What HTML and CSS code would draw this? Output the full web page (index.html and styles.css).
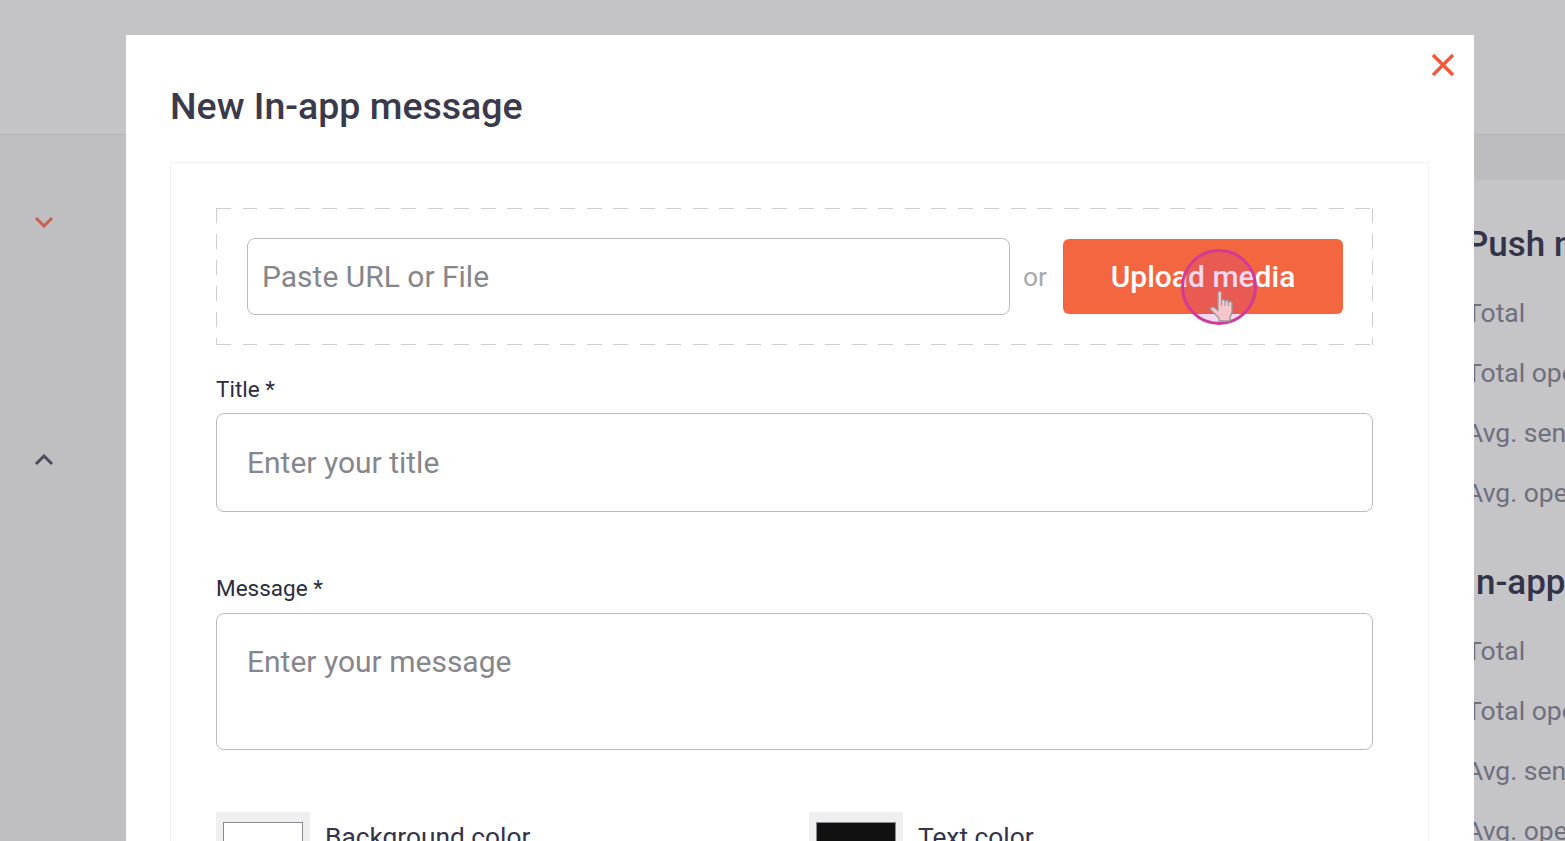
FILE: index.html
```html
<!DOCTYPE html>
<html lang="en">
<head>
<meta charset="utf-8">
<title>New In-app message</title>
<link rel="stylesheet" href="styles.css">
</head>
<body>
<div class="page">
  <header class="topbar"></header>
  <div class="content">
    <aside class="sidebar">
      <svg class="chev chev-down" width="20" height="12" viewBox="0 0 20 12"><path d="M2 2l8 8 8-8" fill="none" stroke="currentColor" stroke-width="3"/></svg>
      <svg class="chev chev-up" width="20" height="12" viewBox="0 0 20 12"><path d="M2 10l8-8 8 8" fill="none" stroke="currentColor" stroke-width="3"/></svg>
    </aside>
    <section class="stats">
      <div class="stats-inner">
        <h2 class="stats-title">Push notifications</h2>
        <p class="stats-row">Total</p>
        <p class="stats-row">Total opened</p>
        <p class="stats-row">Avg. sent</p>
        <p class="stats-row">Avg. opened</p>
        <h2 class="stats-title stats-title-second">In-app messages</h2>
        <p class="stats-row">Total</p>
        <p class="stats-row">Total opened</p>
        <p class="stats-row">Avg. sent</p>
        <p class="stats-row">Avg. opened</p>
      </div>
    </section>
  </div>

  <div class="modal">
    <svg class="close" width="26" height="26" viewBox="0 0 26 26"><path d="M3 3l20 20M23 3L3 23" fill="none" stroke="currentColor" stroke-width="3.4"/></svg>
    <h1 class="modal-title">New In-app message</h1>
    <div class="card">
      <div class="dropzone">
        <input class="url-input" type="text" placeholder="Paste URL or File">
        <span class="or">or</span>
        <button class="upload" type="button">Upload media</button>
      </div>
      <label class="field-label field-label-first">Title *</label>
      <input class="title-input" type="text" placeholder="Enter your title">
      <label class="field-label field-label-second">Message *</label>
      <textarea class="message-input" placeholder="Enter your message"></textarea>
      <div class="colors">
        <div class="color-item">
          <span class="swatch"><span class="swatch-fill swatch-white"></span></span>
          <span class="color-name">Background color</span>
        </div>
        <div class="color-item">
          <span class="swatch"><span class="swatch-fill swatch-black"></span></span>
          <span class="color-name">Text color</span>
        </div>
      </div>
    </div>
  </div>

  <div class="cursor">
    <svg class="hand" width="26" height="32" viewBox="0 0 26 32"><path d="M9 3c0-2.500 3.500-2.500 3.500 0v8c0-2 3.500-2 3.500 0v1c0-2 3.500-2 3.500 0v1c0-2 3.500-2 3.500 0v8c0 2.500-1 4-2 6v4H10v-3c-2-2-5-5-8-8-1.500-1.500 1-4 3-2.500l4 3z" fill="#f6c6cb" stroke="#8f9aa0" stroke-width="1.300"/><path d="M12.500 11v5M16 12v4M19.500 13v3" fill="none" stroke="#8f9aa0" stroke-width="1"/></svg>
  </div>
</div>
</body>
</html>
```
FILE: styles.css
```css
* { box-sizing: border-box; }
html, body { margin: 0; height: 100%; overflow: hidden; }
body { font-family: Roboto, "Liberation Sans", sans-serif; background: #c4c4c6; }

.page { position: relative; width: 1565px; height: 841px; overflow: hidden; background: #c4c4c6; }

.topbar { height: 135px; border-bottom: 1px solid #b2b2b5; background: #c4c4c6; }

.content { display: flex; height: 706px; background: #bdbdc0; }
.sidebar { width: 126px; background: #bfbfc2; display: flex; flex-direction: column; align-items: flex-start; padding: 81px 0 0 34px; }
.chev { display: block; }
.chev-down { color: #c8604f; }
.chev-up { color: #4c4c5a; margin-top: 226px; }

.stats { flex: 1; margin-top: 45px; background: #c5c5c8; display: flex; justify-content: flex-end; overflow: hidden; }
.stats-inner { width: 99px; flex: none; white-space: nowrap; padding-top: 42px; }
.stats-title { margin: 0; font-size: 35px; line-height: 46px; font-weight: 500; color: #33334a; }
.stats-title-second { margin-top: 52px; }
.stats-row { margin: 0; font-size: 26.5px; line-height: 30px; color: #6f6f7d; padding-top: 30px; }
.stats-title + .stats-row { padding-top: 30px; }

.modal { position: absolute; left: 126px; top: 35px; width: 1348px; height: 900px; background: #fff; padding: 44px 45px 0 44px; }
.close { position: absolute; right: 18px; top: 17px; color: #f4583a; }
.modal-title { margin: 0; font-size: 37.5px; line-height: 54px; font-weight: 500; color: #3a3a4c; }
.card { margin-top: 29px; border: 1px solid #f1f1f2; padding: 45px 55px 0 45px; height: 760px; }

.dropzone {
  display: flex; align-items: center; height: 137px; padding: 0 30px 0 31px;
  background:
    repeating-linear-gradient(90deg, #cfcfd1 0 15px, transparent 15px 26.5px) top / 100% 1px no-repeat,
    repeating-linear-gradient(90deg, #cfcfd1 0 15px, transparent 15px 26.5px) bottom / 100% 1px no-repeat,
    repeating-linear-gradient(180deg, #cfcfd1 0 15px, transparent 15px 26px) left / 1px 100% no-repeat,
    repeating-linear-gradient(180deg, #cfcfd1 0 15px, transparent 15px 26px) right / 1px 100% no-repeat;
}
input, textarea { font-family: inherit; color: #33334a; background: #fff; outline: none; display: block; resize: none; }
input::placeholder, textarea::placeholder { color: #86868c; opacity: 1; }
.url-input { width: 763px; height: 77px; border: 1px solid #bcbcc0; border-radius: 8px; padding: 0 14px 1px; font-size: 30px; }
.or { margin: 0 16px 0 13px; width: 24px; font-size: 26.5px; color: #a9a9ad; }
.upload { width: 280px; height: 75px; border: 0; border-radius: 6px; background: #f36640; color: #fff; font: 500 30px Roboto, "Liberation Sans", sans-serif; padding: 0; }

.field-label { display: block; font-size: 22.5px; line-height: 28px; color: #2c2c3c; }
.field-label-first { margin-top: 30px; }
.field-label-second { margin-top: 62px; }
.title-input { width: 100%; height: 99px; margin-top: 10px; border: 1px solid #bcbcc0; border-radius: 8px; padding: 0 30px 1px; font-size: 30px; }
.message-input { width: 100%; height: 137px; margin-top: 11px; border: 1px solid #bcbcc0; border-radius: 8px; padding: 29px 30px; font-size: 30px; line-height: 38px; }

.colors { display: flex; margin-top: 62px; }
.color-item { width: 593px; flex: none; display: flex; align-items: flex-start; }
.swatch { display: block; width: 94px; height: 46px; background: #efefef; padding: 10px 7px 0; flex: none; }
.swatch-fill { display: block; width: 80px; height: 36px; border: 1px solid #8a8a90; }
.swatch-white { background: #fff; }
.swatch-black { background: #111; }
.color-name { margin: 10px 0 0 15px; font-size: 26.3px; line-height: 30px; color: #33334a; }

.cursor { position: absolute; left: 1181px; top: 249px; width: 76px; height: 76px; border-radius: 50%; border: 3px solid #d13a96; background: rgba(190, 40, 170, .18); }
.hand { position: absolute; left: 25px; top: 38px; }
```
